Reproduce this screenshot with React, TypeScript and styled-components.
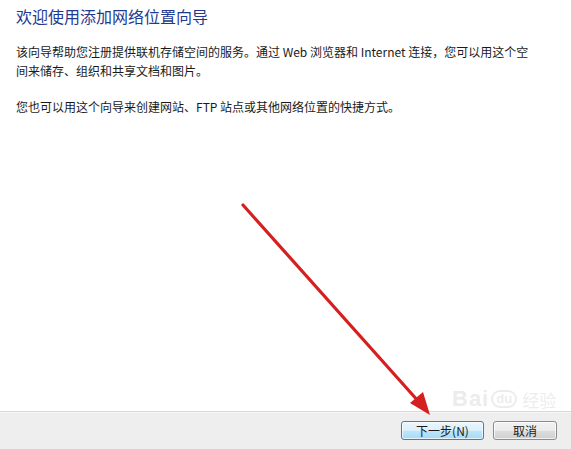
import React from "react";
import styled, { createGlobalStyle } from "styled-components";

const GlobalStyle = createGlobalStyle`
  html, body {
    margin: 0;
    padding: 0;
    background: #ffffff;
  }
  body {
    font-family: "Noto Sans CJK SC", "Liberation Sans", sans-serif;
  }
`;

const paragraphs = [
  [
    "该向导帮助您注册提供联机存储空间的服务。通过 Web 浏览器和 Internet 连接，您可以用这个空",
    "间来储存、组织和共享文档和图片。",
  ],
  ["您也可以用这个向导来创建网站、FTP 站点或其他网络位置的快捷方式。"],
];

export default function App() {
  return (
    <>
      <GlobalStyle />
      <Window>
        <Content>
          <Title>欢迎使用添加网络位置向导</Title>
          <TextBlock>
            {paragraphs.map((lines, i) => (
              <Paragraph key={i}>
                {lines.map((line, j) => (
                  <Line key={j}>{line}</Line>
                ))}
              </Paragraph>
            ))}
          </TextBlock>
        </Content>
        <Footer>
          <Button $primary>下一步(N)</Button>
          <Button>取消</Button>
        </Footer>
        <Watermark>
          <span className="latin">Bai</span>
          <span className="badge">du</span>
          <span className="cn">经验</span>
        </Watermark>
        <Arrow width="571" height="449" viewBox="0 0 571 449">
          <line
            x1="243"
            y1="205"
            x2="419"
            y2="402"
            stroke="#d61f1f"
            strokeWidth="3.2"
            strokeLinecap="round"
          />
          <polygon points="430,415 410,403 423,392" fill="#d61f1f" />
        </Arrow>
      </Window>
    </>
  );
}

const Window = styled.div`
  position: relative;
  width: 571px;
  height: 449px;
  display: flex;
  flex-direction: column;
  background: #ffffff;
  overflow: hidden;
`;

const Content = styled.div`
  flex: 1;
  padding: 5px 16px 0 16px;
`;

const Title = styled.h1`
  margin: 0;
  font-size: 16px;
  line-height: 22px;
  font-weight: 400;
  color: #1f3a8f;
`;

const TextBlock = styled.div`
  margin-top: 15px;
  display: flex;
  flex-direction: column;
  gap: 17px;
`;

const Paragraph = styled.p`
  margin: 0;
  font-size: 12px;
  line-height: 19px;
  color: #1a1a1a;
`;

const Line = styled.span`
  display: block;
  white-space: nowrap;
`;

const Footer = styled.div`
  height: 37px;
  flex-shrink: 0;
  border-top: 1px solid #d9d9d9;
  box-shadow: inset 0 1px 0 #f7f7f7;
  background: #eeeeee;
  display: flex;
  justify-content: flex-end;
  align-items: center;
  gap: 9px;
  padding: 0 14px 0 0;
`;

const Button = styled.button<{ $primary?: boolean }>`
  width: ${(p) => (p.$primary ? "83px" : "64px")};
  height: 19px;
  padding: 0;
  border-radius: 3px;
  font-family: "Noto Sans CJK SC", "Liberation Sans", sans-serif;
  font-size: 12px;
  line-height: 17px;
  color: #1a1a1a;
  border: 1px solid ${(p) => (p.$primary ? "#3c7fb1" : "#8c8c8c")};
  background: ${(p) =>
    p.$primary
      ? "linear-gradient(#eaf6fd 0%, #d9f0fc 50%, #bee6fd 51%, #a7d9f5 100%)"
      : "linear-gradient(#f2f2f2 0%, #ebebeb 50%, #dddddd 51%, #cfcfcf 100%)"};
  box-shadow: inset 0 0 0 1px rgba(255, 255, 255, 0.7);
`;

const Watermark = styled.div`
  position: absolute;
  left: 452px;
  top: 386px;
  display: flex;
  align-items: center;
  gap: 2px;
  color: rgba(200, 200, 200, 0.35);
  font-family: "Liberation Sans", sans-serif;
  pointer-events: none;

  & .latin {
    font-size: 22px;
    font-weight: 700;
    letter-spacing: 1px;
  }

  & .badge {
    font-size: 13px;
    font-weight: 700;
    border: 2px solid rgba(200, 200, 200, 0.35);
    border-radius: 9px;
    padding: 0 3px;
    line-height: 14px;
  }

  & .cn {
    font-family: "Noto Sans CJK SC", sans-serif;
    font-size: 17px;
    margin-left: 3px;
  }
`;

const Arrow = styled.svg`
  position: absolute;
  left: 0;
  top: 0;
  pointer-events: none;
`;
